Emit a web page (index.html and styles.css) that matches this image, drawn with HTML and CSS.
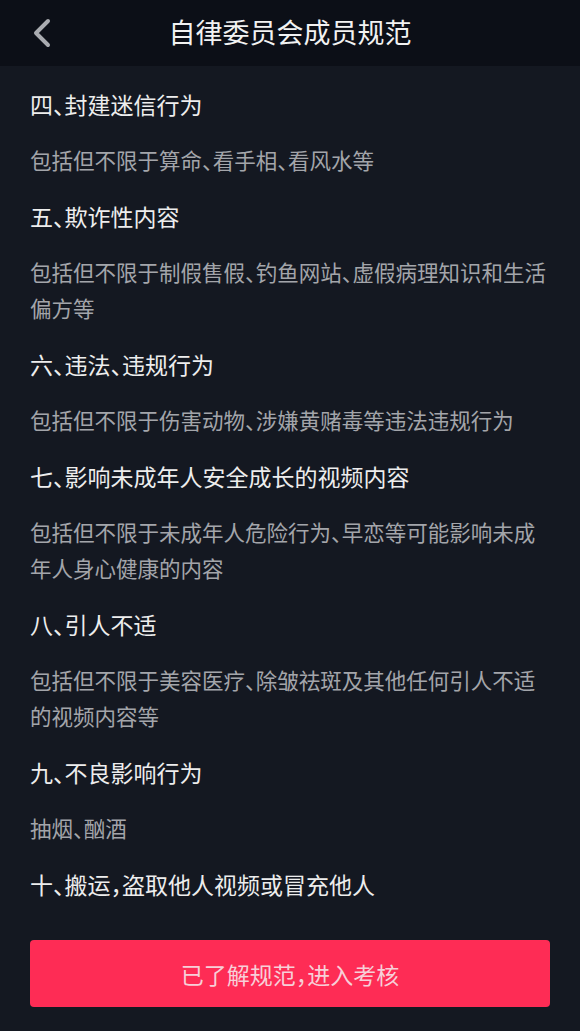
FILE: index.html
```html
<!DOCTYPE html>
<html lang="zh-CN">
<head>
  <meta charset="UTF-8">
  <title>自律委员会成员规范</title>
  <link rel="stylesheet" href="styles.css">
</head>
<body>
  <div class="header">
    <a class="back" href="#">
      <svg width="20" height="30" viewBox="0 0 20 30"><path d="M16 3 L4 15 L16 27" fill="none" stroke="#a9abb0" stroke-width="4" stroke-linecap="round" stroke-linejoin="round"/></svg>
    </a>
    <h1>自律委员会成员规范</h1>
  </div>

  <div class="content">
    <h3>四、封建迷信行为</h3>
    <p>包括但不限于算命、看手相、看风水等</p>
    <h3>五、欺诈性内容</h3>
    <p>包括但不限于制假售假、钓鱼网站、虚假病理知识和生活偏方等</p>
    <h3>六、违法、违规行为</h3>
    <p>包括但不限于伤害动物、涉嫌黄赌毒等违法违规行为</p>
    <h3>七、影响未成年人安全成长的视频内容</h3>
    <p>包括但不限于未成年人危险行为、早恋等可能影响未成年人身心健康的内容</p>
    <h3>八、引人不适</h3>
    <p>包括但不限于美容医疗、除皱祛斑及其他任何引人不适的视频内容等</p>
    <h3>九、不良影响行为</h3>
    <p>抽烟、酗酒</p>
    <h3>十、搬运，盗取他人视频或冒充他人</h3>
  </div>

  <div class="footer">
    <button class="confirm">已了解规范，进入考核</button>
  </div>
</body>
</html>
```

FILE: styles.css
```css
body {
  margin: 0;
  background-color: #141821;
  font-family: "Noto Sans CJK SC", "Noto Sans", sans-serif;
  font-feature-settings: "halt";
}

.header {
  position: relative;
  height: 66px;
  background-color: #0c0f17;
  display: flex;
  align-items: center;
  justify-content: center;
}

.back {
  position: absolute;
  left: 32px;
  top: 18px;
  display: block;
}

.header h1 {
  margin: 0 0 2px;
  color: #f2f2f2;
  font-size: 27px;
  font-weight: normal;
  line-height: 36px;
}

.content {
  padding: 20px 30px 0;
  display: flex;
  flex-direction: column;
  gap: 20px;
}

.content h3,
.content p {
  margin: 0;
  font-size: 21.5px;
  line-height: 36px;
  font-weight: normal;
}

.content h3 {
  color: #ededed;
  font-size: 23px;
}

.content p {
  color: #a3a5aa;
}

.footer {
  padding: 38px 30px 0;
}

.confirm {
  display: block;
  width: 100%;
  height: 67px;
  border: none;
  border-radius: 4px;
  background-color: #fe2c55;
  color: #f7cfd8;
  font-family: inherit;
  font-feature-settings: "halt";
  font-size: 23px;
  cursor: pointer;
}
```
